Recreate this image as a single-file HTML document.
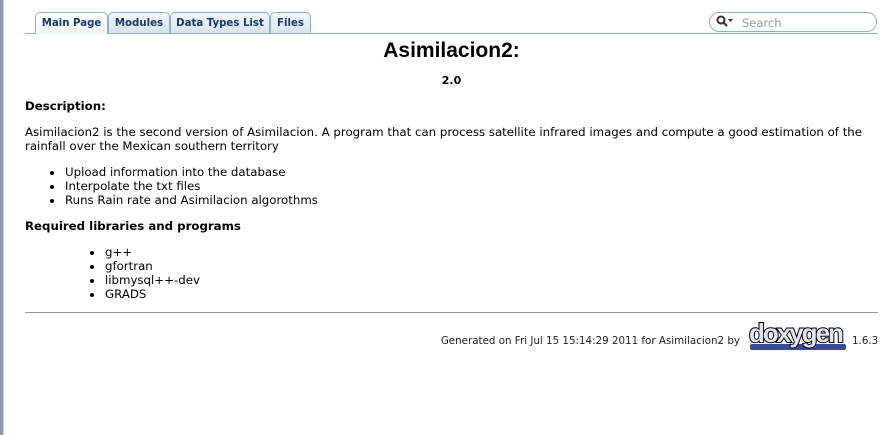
<!DOCTYPE html>
<html><head><meta charset="utf-8"><style>
body{margin:0;width:896px;height:435px;background:#fff;position:relative;overflow:hidden;font-family:"DejaVu Sans","Liberation Sans",sans-serif;font-size:11.78px;color:#000}
.lb{position:absolute;left:0;top:0;width:3px;height:435px;background:#8a9bb0;border-right:1px solid #c8d0da}
.a{position:absolute;white-space:nowrap}
.tab{position:absolute;top:12px;height:21px;border:1px solid #8fb0c4;border-bottom:none;border-radius:5px 5px 0 0;background:linear-gradient(#f4f8fb,#d6e3ec);font-weight:bold;font-size:10.2px;color:#153a6b;text-align:center;line-height:22px;box-sizing:border-box}
.tab.on{background:linear-gradient(#ffffff,#f0f5f8);height:22px}
.b{position:absolute;width:4px;height:4px;border-radius:50%;background:#000}
</style></head><body>
<div class="lb"></div>
<div class="a" style="left:25px;top:33px;width:853px;height:1px;background:#8fb0c4"></div>
<div class="tab on" style="left:35px;width:73px">Main Page</div>
<div class="tab" style="left:108px;width:62px">Modules</div>
<div class="tab" style="left:170px;width:100px">Data Types List</div>
<div class="tab" style="left:270px;width:41px">Files</div>
<div class="a" style="left:709px;top:12px;width:168px;height:20px;border:1px solid #8fb0c4;border-radius:10px;box-sizing:border-box;background:#fff"></div>
<svg class="a" style="left:716px;top:15px" width="20" height="14"><circle cx="5" cy="5" r="3.5" fill="none" stroke="#333" stroke-width="2"/><path d="M7.5 7.5L11 11" stroke="#333" stroke-width="2.2"/><path d="M12 4h5l-2.5 3z" fill="#333"/></svg>
<div class="a" style="left:742px;top:16px;font-size:11.5px;color:#999">Search</div>
<div class="a" style="left:0;width:903px;text-align:center;top:39px;font-family:'Liberation Sans',sans-serif;font-weight:bold;font-size:21px">Asimilacion2:</div>
<div class="a" style="left:0;width:903px;text-align:center;top:74px;font-weight:bold;font-size:11px">2.0</div>
<div class="a" style="left:25px;top:99px;font-weight:bold">Description:</div>
<div class="a" style="left:25px;top:125px;line-height:14px">Asimilacion2 is the second version of Asimilacion. A program that can process satellite infrared images and compute a good estimation of the<br>rainfall over the Mexican southern territory</div>
<div class="b" style="left:50px;top:171px"></div><div class="b" style="left:50px;top:185px"></div><div class="b" style="left:50px;top:199px"></div>
<div class="a" style="left:65px;top:165px;line-height:14px">Upload information into the database<br>Interpolate the txt files<br>Runs Rain rate and Asimilacion algorothms</div>
<div class="a" style="left:25px;top:219px;font-weight:bold">Required libraries and programs</div>
<div class="b" style="left:90px;top:251px"></div><div class="b" style="left:90px;top:265px"></div><div class="b" style="left:90px;top:279px"></div><div class="b" style="left:90px;top:293px"></div>
<div class="a" style="left:105px;top:245px;line-height:14px">g++<br>gfortran<br>libmysql++-dev<br>GRADS</div>
<div class="a" style="left:25px;top:312px;width:853px;height:1px;background:#999"></div>
<div class="a" style="right:156px;top:335px;font-size:10.3px;color:#222">Generated on Fri Jul 15 15:14:29 2011 for Asimilacion2 by</div>
<div class="a" style="left:748px;top:320px;width:100px;height:34px">
<div class="a" style="left:2px;top:24px;width:96px;height:6px;background:#3a4a9a;border-radius:2px"></div>
<div class="a" style="left:1px;top:-2px;font-family:'Liberation Sans',sans-serif;font-weight:bold;font-size:26px;letter-spacing:-2px;color:#dfe6f3;-webkit-text-stroke:2px #000;paint-order:stroke fill">doxygen</div></div>
<div class="a" style="left:852px;top:335px;font-size:10.3px;color:#222">1.6.3</div>
</body></html>
